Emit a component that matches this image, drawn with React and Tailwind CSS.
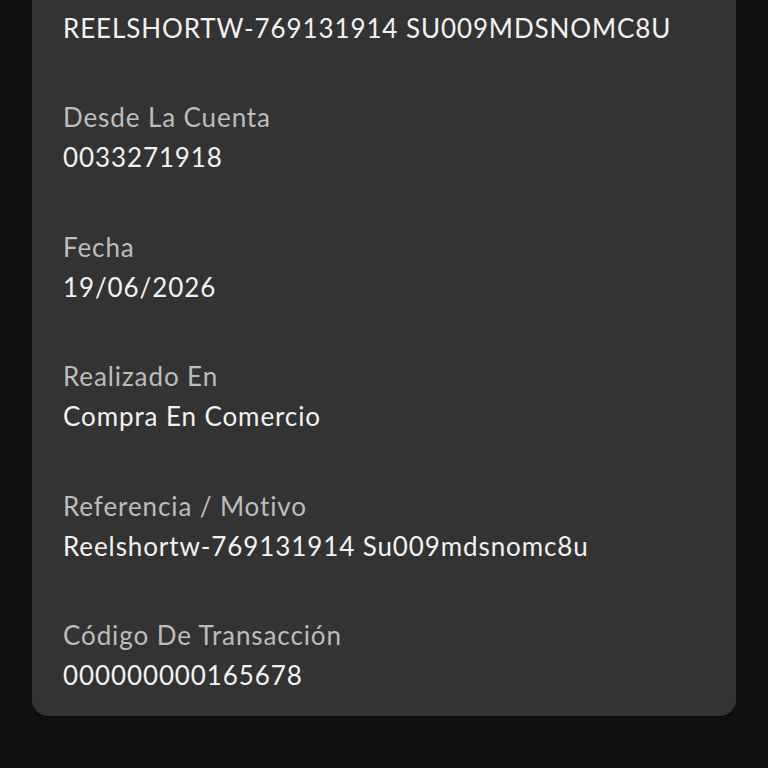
const rows = [
  { label: null, value: "REELSHORTW-769131914 SU009MDSNOMC8U" },
  { label: "Desde La Cuenta", value: "0033271918" },
  { label: "Fecha", value: "19/06/2026" },
  { label: "Realizado En", value: "Compra En Comercio" },
  { label: "Referencia / Motivo", value: "Reelshortw-769131914 Su009mdsnomc8u" },
  { label: "Código De Transacción", value: "000000000165678" },
];

export default function App() {
  return (
    <div className="h-screen overflow-hidden bg-[#111111] flex flex-col justify-end pb-[52px] px-8 font-['Lato','Noto_Sans',sans-serif] tracking-[0.9px]">
      <div className="bg-[#333333] rounded-2xl shadow-[0_1px_2px_rgba(0,0,0,0.6)] pl-[31px] pr-6 pt-6 pb-[21px] flex flex-col gap-[49.5px]">
        {rows.map((r, i) => (
          <div key={i} className="flex flex-col">
            {r.label && (
              <span className="text-[26px] leading-[40px] text-[#bdbdbd]">{r.label}</span>
            )}
            <span className="text-[26px] leading-[40px] text-[#f2f2f2]">{r.value}</span>
          </div>
        ))}
      </div>
    </div>
  );
}
